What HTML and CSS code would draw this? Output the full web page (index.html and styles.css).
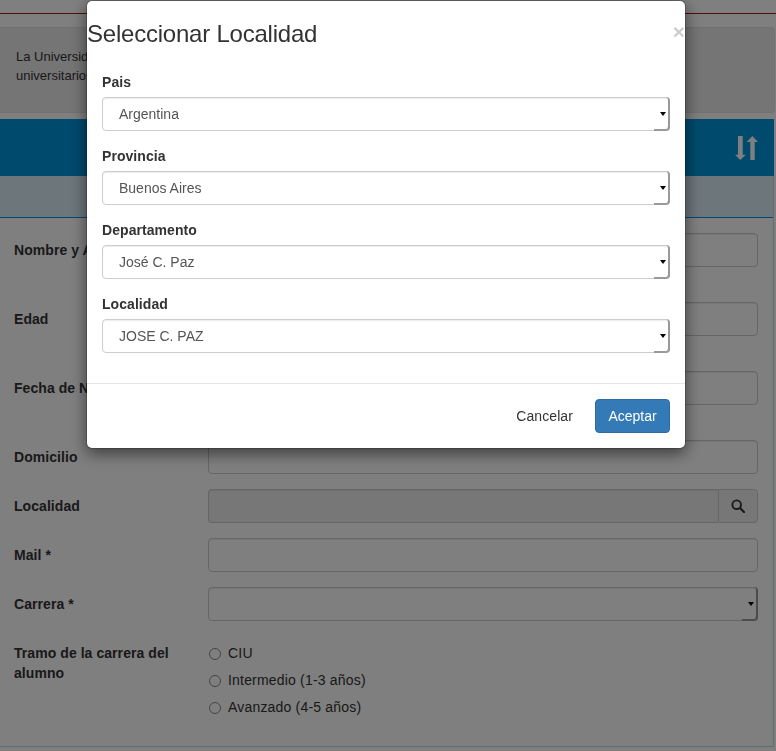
FILE: index.html
```html
<!DOCTYPE html>
<html lang="es">
<head>
  <meta charset="UTF-8">
  <title>Seleccionar Localidad</title>
  <link rel="stylesheet" href="styles.css">
</head>
<body>
  <div class="page">
    <div class="top-strip"></div>
    <div class="well">La Universidad Nacional de José C. Paz<br>universitarios</div>
    <div class="blue-bar">
      <svg class="sort-icon" width="23" height="24" viewBox="0 0 23 24">
        <path d="M3 0h4.700v18.700h3L5.300 24 0 18.700h3z" fill="#fff"/>
        <path d="M17.300 0L23 6h-3.300v18h-4.400V6h-3.600z" fill="#fff"/>
      </svg>
    </div>
    <div class="panel">
      <div class="panel-heading"></div>
      <div class="panel-body">
        <div class="row tall"><label>Nombre y Apellido *</label><input type="text"></div>
        <div class="row tall"><label>Edad</label><input type="text"></div>
        <div class="row tall"><label>Fecha de Nacimiento</label><input type="text"></div>
        <div class="row"><label>Domicilio</label><input type="text"></div>
        <div class="row">
          <label>Localidad</label>
          <div class="input-group">
            <input type="text" disabled>
            <span class="addon">
              <svg width="14" height="14" viewBox="0 0 14 14"><circle cx="5.700" cy="5.700" r="4.300" fill="none" stroke="#333" stroke-width="1.900"/><path d="M9 9l4 4" stroke="#333" stroke-width="2.200" stroke-linecap="round"/></svg>
            </span>
          </div>
        </div>
        <div class="row"><label>Mail *</label><input type="text"></div>
        <div class="row"><label>Carrera *</label><div class="select-wrap"><select><option></option></select></div></div>
        <div class="row radios-row">
          <label>Tramo de la carrera del alumno</label>
          <div class="radios">
            <label class="radio"><input type="radio" name="tramo">CIU</label>
            <label class="radio"><input type="radio" name="tramo">Intermedio (1-3 años)</label>
            <label class="radio"><input type="radio" name="tramo">Avanzado (4-5 años)</label>
          </div>
        </div>
      </div>
    </div>
  </div>

  <div class="backdrop"></div>

  <div class="modal">
    <div class="modal-header">
      <h4>Seleccionar Localidad</h4>
      <span class="close">×</span>
    </div>
    <div class="modal-body">
      <div class="form-group"><label>Pais</label><div class="select-wrap"><select><option>Argentina</option></select></div></div>
      <div class="form-group"><label>Provincia</label><div class="select-wrap"><select><option>Buenos Aires</option></select></div></div>
      <div class="form-group"><label>Departamento</label><div class="select-wrap"><select><option>José C. Paz</option></select></div></div>
      <div class="form-group"><label>Localidad</label><div class="select-wrap"><select><option>JOSE C. PAZ</option></select></div></div>
    </div>
    <div class="modal-footer">
      <button class="btn-link">Cancelar</button>
      <button class="btn-primary">Aceptar</button>
    </div>
  </div>
</body>
</html>
```

FILE: styles.css
```css
* { box-sizing: border-box; }
html, body { margin: 0; height: 751px; overflow: hidden; }
body { font-family: "Liberation Sans", Arial, sans-serif; font-size: 14px; line-height: 20px; color: #333; background: #fff; }

.top-strip { height: 27px; padding-top: 13px; }
.top-strip::before { content: ""; display: block; height: 1px; background: #a01c1c; }

.well { height: 86px; margin-right: 1px; margin-bottom: 6px; padding: 19px 16px; font-size: 13px; line-height: 19px; background: #ebebeb; border: 1px solid #e3e3e3; border-left: 0; border-radius: 0 4px 4px 0; }

.blue-bar { height: 57px; margin-right: 2px; padding-right: 16px; background: #0095dc; display: flex; justify-content: flex-end; align-items: center; }

.panel { margin-right: 2px; height: 571px; border-right: 1px solid #bcdff1; border-bottom: 1px solid #bcdff1; }
.panel-heading { height: 42px; background: #d9edf7; border-bottom: 1px solid #0095dc; }
.panel-body { padding: 15px 15px 0 14px; }

.row { display: flex; height: 49px; align-items: flex-start; }
.row.tall { height: 69px; }
.row > label { width: 194px; flex: none; padding-top: 7px; font-weight: bold; letter-spacing: .06px; }
.row > input, .row > .input-group, .row > .select-wrap { width: 550px; }

input[type="text"] { height: 34px; border: 1px solid #ccc; border-radius: 4px; background: #fff; box-shadow: inset 0 1px 1px rgba(0,0,0,.075); }
input[disabled] { background: #eee; }

.input-group { display: flex; }
.input-group input { flex: 1; min-width: 0; border-right: 0; border-radius: 4px 0 0 4px; }
.addon { width: 40px; height: 34px; display: flex; align-items: center; justify-content: center; background: #eee; border: 1px solid #ccc; border-radius: 0 4px 4px 0; }

.select-wrap { position: relative; height: 34px; }
.select-wrap select { display: block; width: 100%; height: 34px; padding: 0 16px; appearance: none; font: inherit; color: #555; background: #fff; border: 1px solid #ccc; border-radius: 4px; box-shadow: inset 0 1px 1px rgba(0,0,0,.075); }
.select-wrap::before { content: ""; position: absolute; right: 0; top: 0; width: 14px; height: 34px; border-right: 2px solid #999; border-radius: 0 4px 4px 0; box-shadow: inset 0 -2px 0 #999; pointer-events: none; }
.select-wrap::after { content: ""; position: absolute; right: 4px; top: 15px; border: 3.500px solid transparent; border-top: 4px solid #000; border-bottom: 0; pointer-events: none; }

.radios { padding-top: 3px; }
.radio { display: flex; align-items: center; height: 27px; font-weight: normal; letter-spacing: .19px; }
.radio input { width: 12px; height: 12px; margin: 2px 7px 0 1px; opacity: .85; }

.backdrop { position: fixed; inset: 0; background: rgba(0,0,0,.5); }

.modal { position: fixed; left: 86px; top: 0; width: 600px; height: 449px; background: #fff; border: 1px solid rgba(0,0,0,.2); border-radius: 6px; box-shadow: 0 5px 15px rgba(0,0,0,.5); background-clip: padding-box; }
.modal-header { height: 56px; position: relative; }
.modal-header h4 { margin: 0; height: 56px; font-size: 24px; font-weight: normal; line-height: 65px; letter-spacing: -.22px; color: #333; }
.close { position: absolute; right: 0; top: 20px; font-size: 21px; font-weight: bold; line-height: 21px; color: #000; opacity: .2; }
.modal-body { height: 327px; padding: 15px 15px 0; border-bottom: 1px solid #e5e5e5; }
.form-group { margin-bottom: 15px; }
.form-group label { display: block; margin-bottom: 5px; font-weight: bold; letter-spacing: .06px; }
.modal-footer { display: flex; justify-content: flex-end; gap: 10px; padding: 15px; }
.modal-footer button { height: 34px; padding: 0 12px; font: inherit; border-radius: 4px; cursor: pointer; }
.btn-link { background: none; border: 0; color: #333; letter-spacing: .1px; }
.btn-primary { width: 75px; padding: 0; background: #337ab7; border: 1px solid #2e6da4; color: #fff; }
```
